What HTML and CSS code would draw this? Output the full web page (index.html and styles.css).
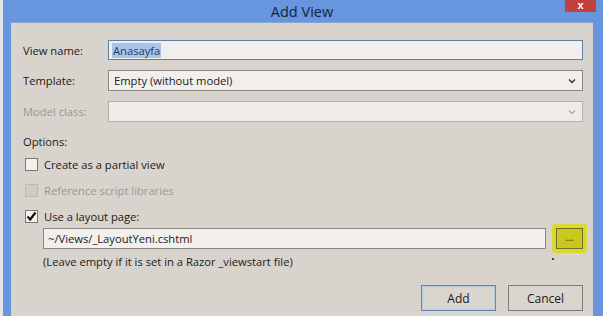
FILE: index.html
```html
<!DOCTYPE html>
<html>
<head>
<meta charset="utf-8">
<link rel="stylesheet" href="styles.css">
</head>
<body>
<div class="screen">
  <div class="behind"></div>
  <div class="window">
    <div class="titlebar">Add View</div>
    <div class="close">x</div>
    <div class="panel">
      <div class="form">
        <label class="lbl">View name:</label>
        <div class="field name"><span class="sel">Anasayfa</span></div>
        <label class="lbl">Template:</label>
        <div class="field combo"><span>Empty (without model)</span><svg class="chev" width="8" height="6" viewBox="0 0 8 6"><path d="M1 1.5 L4 4.5 L7 1.5" fill="none" stroke="#333" stroke-width="1.4"/></svg></div>
        <label class="lbl dis">Model class:</label>
        <div class="field combo off"><span></span><svg class="chev" width="8" height="6" viewBox="0 0 8 6"><path d="M1 1.5 L4 4.5 L7 1.5" fill="none" stroke="#b0aca6" stroke-width="1.4"/></svg></div>
      </div>
      <div class="options">Options:</div>
      <div class="check"><span class="box"></span><span>Create as a partial view</span></div>
      <div class="check dis"><span class="box off"></span><span>Reference script libraries</span></div>
      <div class="check"><span class="box"><svg width="11" height="11" viewBox="0 0 11 11"><path d="M1.5 5.5 L4.2 8.5 L9.5 1.5" fill="none" stroke="#111" stroke-width="2.2"/></svg></span><span>Use a layout page:</span></div>
      <div class="layoutrow">
        <div class="field path">~/Views/_LayoutYeni.cshtml</div>
        <div class="hl"><div class="browse">...</div></div>
      </div>
      <div class="hint">(Leave empty if it is set in a Razor _viewstart file)<span class="dot"></span></div>
      <div class="buttons">
        <div class="btn def">Add</div>
        <div class="btn">Cancel</div>
      </div>
    </div>
  </div>
</div>
</body>
</html>
```
FILE: styles.css
```css
html, body {
  margin: 0;
  padding: 0;
}
body {
  font-family: "Open Sans", "Noto Sans", "Liberation Sans", sans-serif;
  font-size: 11.2px;
  color: #1a1a1a;
}
.screen {
  width: 603px;
  height: 316px;
  display: flex;
  overflow: hidden;
}
.behind {
  width: 3px;
  background: #e4e6ea;
}
.window {
  flex: 1;
  position: relative;
  display: flex;
  flex-direction: column;
  background: #6795de;
  padding: 0 10px 0 8px;
}
.titlebar {
  height: 22px;
  display: flex;
  align-items: center;
  justify-content: center;
  font-size: 14.5px;
  color: #15233d;
  padding-top: 1px;
  box-sizing: border-box;
}
.close {
  position: absolute;
  top: 0;
  right: 7px;
  width: 31px;
  height: 12px;
  background: #c4403a;
  color: #fff;
  font-size: 11px;
  line-height: 10px;
  text-align: center;
  font-family: "Liberation Sans", sans-serif;
  font-weight: bold;
}
.panel {
  flex: 1;
  background: #d8d4cd;
  border-top: 1px solid #8aa6d0;
  padding: 17px 10px 0 12px;
  display: flex;
  flex-direction: column;
}
.form {
  display: grid;
  grid-template-columns: 85px 1fr;
  row-gap: 10px;
  align-items: center;
}
.lbl {
  font-size: 11.2px;
}
.dis {
  color: #9a9792;
}
.field {
  height: 20px;
  box-sizing: border-box;
  background: #f1efeb;
  border: 1px solid #8b8781;
  display: flex;
  align-items: center;
  padding: 0 5px;
}
.name {
  border-color: #5d7fa8;
  padding-left: 3px;
}
.sel {
  background: #a9c4e8;
  color: #1e3a6a;
  padding: 0 1px;
}
.combo {
  justify-content: space-between;
  padding-right: 6px;
  height: 21px;
}
.combo.off {
  border-color: #b4b0a9;
  background: #efede9;
}
.chev {
  display: block;
}
.options {
  margin-top: 11px;
  height: 17px;
  line-height: 17px;
}
.check {
  display: flex;
  align-items: center;
  gap: 6px;
  height: 14px;
  margin-top: 10px;
}
.check + .check {
  margin-top: 12px;
}
.options + .check {
  margin-top: 7px;
}
.box {
  width: 13px;
  height: 13px;
  box-sizing: border-box;
  border: 1px solid #7b7873;
  background: #f4f2ee;
  display: flex;
  align-items: center;
  justify-content: center;
  margin-left: 2px;
}
.box.off {
  border-color: #bdb9b2;
  background: #d0ccc5;
}
.layoutrow {
  display: flex;
  align-items: center;
  margin-top: 5px;
  margin-left: 20px;
  gap: 6px;
}
.path {
  flex: 1;
  height: 21px;
  background: #f2f0ec;
  padding-left: 4px;
}
.hl {
  background: #dada2a;
  border-radius: 4px;
  padding: 4px;
  margin: -4px -4px -4px 0;
}
.browse {
  width: 27px;
  height: 21px;
  box-sizing: border-box;
  border: 1px solid #6e6a30;
  background: #c9c91c;
  display: flex;
  align-items: center;
  justify-content: center;
  font-size: 10px;
  line-height: 10px;
  padding-bottom: 3px;
}
.hint {
  margin-left: 20px;
  margin-top: 4px;
  height: 17px;
  line-height: 17px;
  position: relative;
}
.dot {
  position: absolute;
  left: 509px;
  top: 5px;
  width: 2px;
  height: 2px;
  background: #445;
}
.buttons {
  display: flex;
  justify-content: flex-end;
  gap: 12px;
  margin-top: 15px;
}
.btn {
  width: 75px;
  height: 26px;
  box-sizing: border-box;
  border: 1px solid #7e7a75;
  background: #d9d5cf;
  display: flex;
  align-items: center;
  justify-content: center;
  font-size: 12px;
}
.btn.def {
  border-color: #5f86b8;
  box-shadow: inset 0 0 0 1px #b9cbe2;
}
```
